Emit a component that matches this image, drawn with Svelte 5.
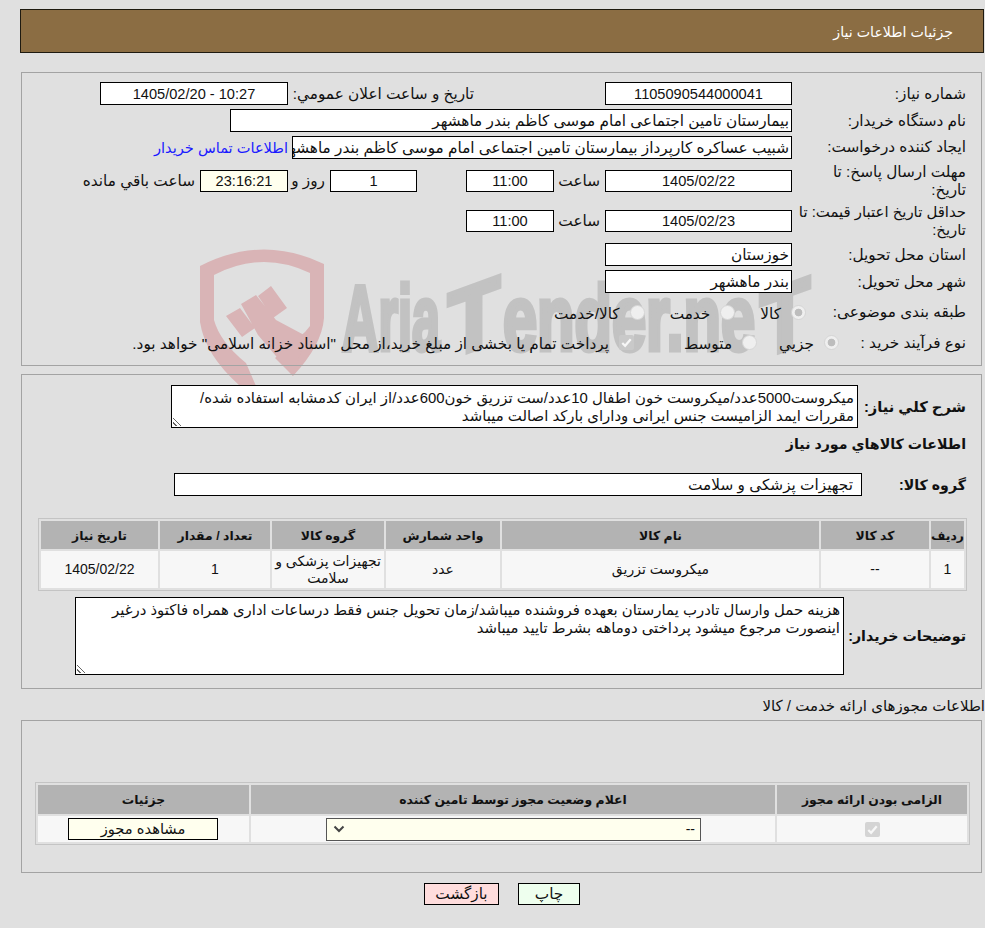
<script>
	const goods = [
		{ row: '1', code: '--', name: 'میکروست تزریق', unit: 'عدد', group: 'تجهیزات پزشکی و سلامت', qty: '1', date: '1405/02/22' }
	];
</script>

<div class="page" dir="rtl">
	<svg class="mark" viewBox="0 0 985 928" aria-hidden="true">
		<path
			fill="#d9b4b6"
			d="M200 266 Q262 234 324 264 V318 Q322 345 293 376 L275 358 L305 332 L310 326 V273 Q262 250 214 275 V320 Q220 342 246 363 L256 386 L240 386 Q205 355 200 322 Z"
		/>
		<path
			fill="#d9b4b6"
			d="M226 316 L240 308 L255 328 L242 337 Z M258 296 L271 286 L287 308 L273 318 Z M241 304 L256 295 L276 320 L306 336 L293 376 L258 335 Z"
		/>
		<g class="mark-text">
			<text x="342" y="350" textLength="98" lengthAdjust="spacingAndGlyphs">Aria</text>
			<text transform="translate(448 359) skewY(-20)" textLength="52" lengthAdjust="spacingAndGlyphs">T</text>
			<text x="503" y="350" textLength="252" lengthAdjust="spacingAndGlyphs">ender.ne</text>
			<text transform="translate(760 359) skewY(-20)" textLength="50" lengthAdjust="spacingAndGlyphs">T</text>
		</g>
	</svg>

	<header class="title">جزئیات اطلاعات نیاز</header>

	<section class="panel info">
		<div class="row">
			<span class="label">شماره نیاز:</span>
			<div class="box w187 center">1105090544000041</div>
			<span class="announce">تاریخ و ساعت اعلان عمومي:</span>
			<div class="box w188 center" dir="ltr">1405/02/20 - 10:27</div>
		</div>
		<div class="row">
			<span class="label">نام دستگاه خریدار:</span>
			<div class="box buyer">بیمارستان تامین اجتماعی امام موسی کاظم بندر ماهشهر</div>
		</div>
		<div class="row">
			<span class="label">ایجاد کننده درخواست:</span>
			<div class="box creator">شبیب عساکره کارپرداز بیمارستان تامین اجتماعی امام موسی کاظم بندر ماهشهر</div>
			<a class="contact" href="#contact">اطلاعات تماس خریدار</a>
		</div>
		<div class="row dates">
			<span class="label">مهلت ارسال پاسخ: تا تاریخ:</span>
			<div class="box w187 center">1405/02/22</div>
			<span class="hour">ساعت</span>
			<div class="box w88 center">11:00</div>
			<div class="box w87 center days">1</div>
			<span class="day-text">روز و</span>
			<div class="box w88 center remain">23:16:21</div>
			<span class="left-text">ساعت باقي مانده</span>
		</div>
		<div class="row dates">
			<span class="label long">حداقل تاریخ اعتبار قیمت: تا تاریخ:</span>
			<div class="box w187 center">1405/02/23</div>
			<span class="hour">ساعت</span>
			<div class="box w88 center">11:00</div>
		</div>
		<div class="row">
			<span class="label">استان محل تحویل:</span>
			<div class="box w187">خوزستان</div>
		</div>
		<div class="row">
			<span class="label">شهر محل تحویل:</span>
			<div class="box w187">بندر ماهشهر</div>
		</div>
		<div class="row subject">
			<span class="label">طبقه بندی موضوعی:</span>
			<span class="radio on"></span><span class="opt">کالا</span>
			<span class="radio"></span><span class="opt">خدمت</span>
			<span class="radio"></span><span class="opt">کالا/خدمت</span>
		</div>
		<div class="row process">
			<span class="label">نوع فرآیند خرید :</span>
			<span class="radio on"></span><span class="opt">جزیي</span>
			<span class="radio"></span><span class="opt">متوسط</span>
			<span class="check faded">
				<svg viewBox="0 0 16 16"><path d="M3.5 8.5 L6.5 11.5 L12.5 4.5" /></svg>
			</span>
			<span class="opt">پرداخت تمام يا بخشی از مبلغ خرید،از محل "اسناد خزانه اسلامی" خواهد بود.</span>
		</div>
	</section>

	<section class="panel details">
		<div class="row desc">
			<b class="label">شرح کلي نیاز:</b>
			<div class="area short">
				میکروست5000عدد/میکروست خون اطفال 10عدد/ست تزریق خون600عدد/از ایران کدمشابه استفاده شده/ مقررات ایمد الزامیست جنس ایرانی ودارای بارکد اصالت میباشد
				<i class="grip"></i>
			</div>
		</div>
		<b class="goods-title">اطلاعات کالاهاي مورد نیاز</b>
		<div class="row group">
			<b class="label">گروه کالا:</b>
			<div class="box group-box">تجهیزات پزشکی و سلامت</div>
		</div>
		<table class="grid goods">
			<thead>
				<tr>
					<th>ردیف</th>
					<th>کد کالا</th>
					<th>نام کالا</th>
					<th>واحد شمارش</th>
					<th>گروه کالا</th>
					<th>تعداد / مقدار</th>
					<th>تاریخ نیاز</th>
				</tr>
			</thead>
			<tbody>
				{#each goods as g}
					<tr>
						<td>{g.row}</td>
						<td>{g.code}</td>
						<td>{g.name}</td>
						<td>{g.unit}</td>
						<td>{g.group}</td>
						<td>{g.qty}</td>
						<td>{g.date}</td>
					</tr>
				{/each}
			</tbody>
		</table>
		<div class="row notes">
			<b class="label">توضیحات خریدار:</b>
			<div class="area tall">
				هزینه حمل وارسال تادرب یمارستان بعهده فروشنده میباشد/زمان تحویل جنس فقط درساعات اداری همراه فاکتوذ درغیر اینصورت مرجوع میشود پرداختی دوماهه بشرط تایید میباشد
				<i class="grip"></i>
			</div>
		</div>
	</section>

	<p class="permits-title">اطلاعات مجوزهای ارائه خدمت / کالا</p>

	<section class="panel permits">
		<table class="grid">
			<thead>
				<tr>
					<th>الزامی بودن ارائه مجوز</th>
					<th>اعلام وضعیت مجوز توسط تامین کننده</th>
					<th>جزئیات</th>
				</tr>
			</thead>
			<tbody>
				<tr>
					<td>
						<span class="check">
							<svg viewBox="0 0 16 16"><path d="M3.5 8.5 L6.5 11.5 L12.5 4.5" /></svg>
						</span>
					</td>
					<td>
						<div class="select">
							<span>--</span>
							<svg viewBox="0 0 12 8"><path d="M1.5 1.5 L6 6 L10.5 1.5" /></svg>
						</div>
					</td>
					<td><button class="view" type="button">مشاهده مجوز</button></td>
				</tr>
			</tbody>
		</table>
	</section>

	<div class="actions">
		<button class="print" type="button">چاپ</button>
		<button class="back" type="button">بازگشت</button>
	</div>
</div>

<style>
	:global(body) {
		margin: 0;
		background: #e0e0e0;
	}

	.page {
		position: relative;
		width: 985px;
		height: 928px;
		padding-top: 9px;
		box-sizing: border-box;
		font-family: "Liberation Sans", "DejaVu Sans", sans-serif;
		font-size: 15.3px;
		color: #111;
		overflow: hidden;
	}

	.mark {
		position: absolute;
		inset: 0;
		width: 985px;
		height: 928px;
	}

	.mark-text {
		direction: ltr;
		font-family: "Liberation Sans", sans-serif;
		font-size: 93px;
		font-weight: 700;
		fill: #c2c2c2;
		stroke: #c2c2c2;
		stroke-width: 5px;
	}

	.title {
		position: relative;
		box-sizing: border-box;
		height: 44px;
		margin-right: 1px;
		margin-left: 20px;
		padding-right: 30px;
		font-size: 14.2px;
		line-height: 44px;
		background: #8b6d43;
		border: 1px solid #1e1a10;
		color: #fff;
	}

	.panel {
		position: relative;
		box-sizing: border-box;
		width: 961px;
		margin-right: 3px;
		margin-left: 21px;
		border: 1px solid #a3a3a3;
	}

	.info {
		display: grid;
		grid-template-rows: 27px 27px 26px 41px 39px 29px 25px 36px 25px;
		height: 294px;
		margin-top: 19px;
		padding: 7px 15px 0 0;
	}

	.row {
		display: flex;
		align-items: center;
	}

	.label {
		flex: none;
		box-sizing: border-box;
		width: 174px;
		padding-left: 5px;
		line-height: 18px;
	}

	.label.long {
		padding-left: 0;
		font-size: 14.9px;
	}

	.box {
		flex: none;
		box-sizing: border-box;
		height: 23px;
		padding: 0 2px;
		line-height: 22px;
		background: #fff;
		border: 1px solid #000;
		white-space: nowrap;
		overflow: hidden;
	}

	.dates .box {
		height: 22px;
		line-height: 21px;
	}

	.center {
		font-size: 14.6px;
		text-align: center;
	}

	.w187 {
		width: 187px;
	}

	.w188 {
		width: 188px;
	}

	.w88 {
		width: 88px;
	}

	.w87 {
		width: 87px;
	}

	.buyer {
		width: 562px;
	}

	.creator {
		width: 500px;
	}

	.announce {
		width: 317px;
		padding-right: 131px;
		box-sizing: border-box;
		white-space: nowrap;
	}

	.contact {
		margin-right: 4px;
		font-size: 14.6px;
		color: #1a1aff;
		text-decoration: none;
		white-space: nowrap;
	}

	.hour {
		width: 51px;
		box-sizing: border-box;
		padding-right: 5px;
	}

	.days {
		margin-right: 49px;
	}

	.day-text {
		width: 42px;
		box-sizing: border-box;
		padding-right: 5px;
	}

	.remain {
		background: #ffffee;
	}

	.left-text {
		padding-right: 5px;
		white-space: nowrap;
	}

	.radio {
		flex: none;
		box-sizing: border-box;
		width: 15px;
		height: 15px;
		border-radius: 50%;
		background: #efefef;
		border: 1px solid #d6d6d6;
	}

	.radio.on {
		background: radial-gradient(circle, #bdbdbd 0 3.5px, #efefef 4.2px);
	}

	.opt {
		padding-top: 3px;
		padding-right: 10px;
		white-space: nowrap;
	}

	.subject .label {
		width: 160px;
	}

	.subject .radio + .opt + .radio {
		margin-right: 25px;
	}

	.process .label {
		width: 127px;
	}

	.process .radio + .opt + .radio {
		margin-right: 22px;
	}

	.check {
		display: inline-flex;
		box-sizing: border-box;
		width: 15px;
		height: 15px;
		border-radius: 2px;
		background: #d4d4d4;
		vertical-align: middle;
	}

	.check svg {
		width: 100%;
		height: 100%;
	}

	.check path {
		fill: none;
		stroke: #f7f7f7;
		stroke-width: 2.4;
	}

	.check.faded {
		flex: none;
		margin-right: 50px;
		background: #c9c9c9;
	}

	.details {
		height: 315px;
		margin-top: 8px;
		padding: 10px 15px 0 0;
	}

	b {
		font-size: 14.2px;
		white-space: nowrap;
	}

	.desc .label {
		width: 108px;
		font-size: 14.7px;
	}

	.area {
		position: relative;
		box-sizing: border-box;
		padding: 0 3px;
		font-size: 14.9px;
		line-height: 18px;
		background: #fff;
		border: 1px solid #000;
	}

	.short {
		width: 687px;
		height: 43px;
		padding-top: 3px;
	}

	.tall {
		width: 769px;
		height: 78px;
		padding-top: 3px;
	}

	.grip {
		position: absolute;
		bottom: 1px;
		left: 1px;
		width: 10px;
		height: 10px;
		background: repeating-linear-gradient(45deg, transparent 0 2px, #666 2px 3px);
		clip-path: polygon(0 0, 100% 100%, 0 100%);
	}

	.goods-title {
		display: block;
		margin-top: 6px;
		line-height: 20px;
	}

	.group {
		margin-top: 19px;
	}

	.group .label {
		width: 104px;
	}

	.group-box {
		width: 688px;
		padding-right: 8px;
	}

	.grid {
		border-collapse: separate;
		border-spacing: 2px;
		background: #e0e0e0;
		border: 1px solid #c4c4c4;
		table-layout: fixed;
	}

	.goods {
		width: 929px;
		margin: 22px -1px 0 0;
	}

	.goods th:nth-child(1) { width: 33px; }
	.goods th:nth-child(2) { width: 108px; }
	.goods th:nth-child(3) { width: 317px; }
	.goods th:nth-child(4) { width: 114px; }
	.goods th:nth-child(5) { width: 112px; }
	.goods th:nth-child(6) { width: 110px; }

	th {
		height: 28px;
		padding: 0;
		font-size: 12.4px;
		background: #b3b3b3;
	}

	td {
		padding: 0;
		font-size: 14px;
		text-align: center;
		line-height: 17px;
		background: #f7f7f7;
	}

	.goods td {
		height: 37px;
	}

	.notes {
		margin-top: 6px;
	}

	.notes .label {
		width: 122px;
	}

	.permits-title {
		position: relative;
		height: 22px;
		margin: 8px 0 0;
		font-size: 15px;
		line-height: 18px;
	}

	.permits {
		height: 153px;
		margin-top: 1px;
		padding-top: 61px;
		padding-right: 11px;
	}

	.permits .grid {
		width: 935px;
	}

	.permits th:nth-child(1) { width: 190px; }
	.permits th:nth-child(2) { width: 524px; }

	.permits th {
		height: 29px;
	}

	.permits td {
		height: 26px;
	}

	.select {
		display: flex;
		align-items: center;
		justify-content: space-between;
		box-sizing: border-box;
		width: 375px;
		height: 23px;
		margin-right: 74px;
		padding: 0 5px 0 6px;
		background: #ffffee;
		border: 1px solid #555;
	}

	.select svg {
		width: 12px;
		height: 8px;
	}

	.select path {
		fill: none;
		stroke: #444;
		stroke-width: 2;
	}

	button {
		font: inherit;
		color: #111;
		padding: 0;
		border: 1px solid #000;
		box-sizing: border-box;
		height: 22px;
	}

	.view {
		display: block;
		width: 150px;
		height: 22px;
		margin-right: 31px;
		font-size: 14.7px;
		background: #ffffee;
	}

	.actions {
		position: relative;
		display: flex;
		justify-content: center;
		gap: 19px;
		margin-top: 10px;
		padding-left: 19px;
	}

	.print {
		width: 62px;
		background: #eeffee;
	}

	.back {
		width: 75px;
		background: #ffdddd;
	}
</style>
